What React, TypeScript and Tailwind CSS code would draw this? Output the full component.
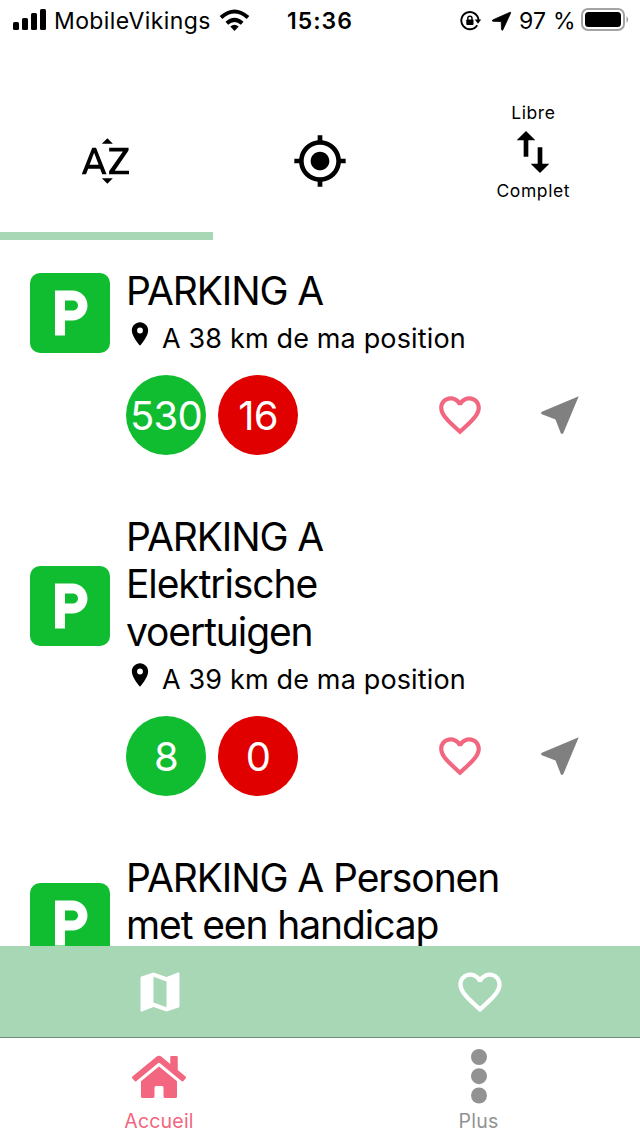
import { FaHome } from 'react-icons/fa';
import {
  MdFavoriteBorder,
  MdGpsFixed,
  MdLocalParking,
  MdLocationOn,
  MdMap,
  MdNearMe,
  MdSortByAlpha,
  MdSwapVert,
} from 'react-icons/md';

const parkings = [
  { id: 1, lines: ['PARKING A'], distance: 38, free: 530, taken: 16 },
  { id: 2, lines: ['PARKING A', 'Elektrische', 'voertuigen'], distance: 39, free: 8, taken: 0 },
  { id: 3, lines: ['PARKING A Personen', 'met een handicap'], distance: 39, free: 2, taken: 0 },
];

type Parking = (typeof parkings)[number];

function StatusBar() {
  return (
    <div className="flex h-10 shrink-0 items-center">
      <svg className="ml-[13px] h-[22px] w-[34px] shrink-0" viewBox="0 0 34 22">
        <rect x="0" y="13" width="6" height="8" rx="1.5" />
        <rect x="9" y="9" width="6" height="12" rx="1.5" />
        <rect x="18" y="4" width="6" height="17" rx="1.5" />
        <rect x="27" y="0" width="6" height="21" rx="1.5" />
      </svg>
      <span className="ml-[7px] w-[158px] pt-0.5 whitespace-nowrap text-[23px] tracking-[0.4px]">MobileVikings</span>
      <svg className="ml-[7px] h-[23px] w-[31px] shrink-0" viewBox="0 0 31 23">
        <path d="M15.5 22 L11.3 17.6 Q15.5 14 19.7 17.6 Z" />
        <path d="M7.8 14.3 Q15.5 7.6 23.2 14.3" fill="none" stroke="#000" strokeWidth="4" />
        <path d="M2 8.6 Q15.5 -3.6 29 8.6" fill="none" stroke="#000" strokeWidth="4" />
      </svg>
      <span className="ml-[37px] w-[68px] pt-0.5 whitespace-nowrap text-[23px] font-semibold tracking-[1px]">15:36</span>
      <svg className="mt-0.5 ml-[105px] h-[22px] w-[22px] shrink-0" viewBox="0 0 22 22">
        <path d="M17.2 15.2 A8.6 8.6 0 1 1 18.5 10" fill="none" stroke="#000" strokeWidth="1.9" />
        <path d="M14.8 9.5 h6.4 l-3.2 4.3 z" />
        <rect x="6.3" y="9.4" width="7.2" height="5.6" rx="0.8" />
        <path d="M7.8 10 V8.3 a2.1 2.1 0 0 1 4.2 0 V10" fill="none" stroke="#000" strokeWidth="1.4" />
      </svg>
      <svg className="mt-0.5 ml-[10px] h-[20px] w-[20px] shrink-0" viewBox="0 0 20 20">
        <path d="M18.2 1.2 L0.6 9 Q-0.3 10 1.1 10.3 L9.2 10.6 L9.5 18.4 Q10 20 10.9 18.8 L18.8 1.7 Z" stroke="#000" strokeWidth="0.8" />
      </svg>
      <span className="ml-[7px] w-[59px] pt-0.5 whitespace-nowrap text-[23px] tracking-[0.2px]">97 %</span>
      <svg className="ml-[3px] h-[24px] w-[49px] shrink-0" viewBox="0 0 49 24">
        <rect x="1" y="1" width="42" height="21" rx="6" fill="none" stroke="#a3a3a3" strokeWidth="2" />
        <rect x="4" y="4" width="36" height="15" rx="3.5" />
        <path d="M45.5 8 Q49 11.5 45.5 15 Z" fill="#a3a3a3" />
      </svg>
    </div>
  );
}

function SortTabs() {
  return (
    <div className="grid h-[200px] shrink-0 grid-cols-3">
      <button className="flex items-center justify-center border-b-8 border-[#a7d7b5] pt-[50px] pr-[1px]">
        <MdSortByAlpha size={56} />
      </button>
      <button className="flex items-center justify-center border-b-8 border-transparent pt-[50px]">
        <MdGpsFixed size={56} />
      </button>
      <button className="flex flex-col items-center border-b-8 border-transparent pt-[61px] text-[17.5px] leading-[23px] tracking-[0.6px]">
        <span>Libre</span>
        <MdSwapVert size={56} className="-mb-[1px]" />
        <span>Complet</span>
      </button>
    </div>
  );
}

function ParkingRow({ parking }: { parking: Parking }) {
  return (
    <li className="pb-[57px]">
      <div className="flex items-center pl-[30px]">
        <div className="flex size-20 shrink-0 items-center justify-center rounded-[10px] bg-[#10bd30] text-white">
          <MdLocalParking size={60} />
        </div>
        <div className="ml-4">
          <h2 className="-mb-px pt-px text-[39px] leading-[47.65px] tracking-[-1.1px]">
            {parking.lines.map((line) => (
              <span key={line} className="block whitespace-nowrap">{line}</span>
            ))}
          </h2>
          <p className="flex h-[46px] text-[27px] leading-[49px] tracking-[0.15px]">
            <MdLocationOn size={28} className="mt-[6px] mr-2 shrink-0" />
            <span className="whitespace-nowrap">A {parking.distance} km de ma position</span>
          </p>
        </div>
      </div>
      <div className="mt-[15px] flex items-center pl-[126px]">
        <div className="flex size-20 items-center justify-center rounded-full bg-[#10bd30] pt-0.5 text-[40px] tracking-[-0.8px] text-white">
          {parking.free}
        </div>
        <div className="ml-3 flex size-20 items-center justify-center rounded-full bg-[#e10000] pt-0.5 text-[40px] tracking-[-0.8px] text-white">
          {parking.taken}
        </div>
        <MdFavoriteBorder size={50} className="ml-[137px] text-[#f2667f]" />
        <MdNearMe size={50} className="ml-[50px] text-[#808080]" />
      </div>
    </li>
  );
}

function BottomNav() {
  return (
    <nav className="grid h-[98px] shrink-0 grid-cols-2 text-[19.5px] leading-6 tracking-[0.2px]">
      <button className="flex flex-col items-center pt-[15px] pr-[2px] text-[#f2667f]">
        <FaHome className="h-12 w-[54px]" />
        <span className="mt-[8px]">Accueil</span>
      </button>
      <button className="flex flex-col items-center pt-[10px] pr-[3px] text-[#929292]">
        <svg className="h-14 w-4" viewBox="0 0 16 56" fill="currentColor">
          <circle cx="8" cy="9" r="8" />
          <circle cx="8" cy="28.2" r="8" />
          <circle cx="8" cy="47.5" r="8" />
        </svg>
        <span className="mt-[5px]">Plus</span>
      </button>
    </nav>
  );
}

export default function App() {
  return (
    <div className="flex h-[1136px] w-[640px] flex-col overflow-hidden bg-white font-['Inter',sans-serif] text-black">
      <StatusBar />
      <SortTabs />
      <ul className="min-h-0 flex-1 overflow-hidden pt-[26px]">
        {parkings.map((parking) => (
          <ParkingRow key={parking.id} parking={parking} />
        ))}
      </ul>
      <div className="grid h-[92px] shrink-0 grid-cols-2 border-b border-[#6f9079] bg-[#a7d7b5] text-white">
        <button className="flex items-center justify-center pt-px">
          <MdMap size={52} />
        </button>
        <button className="flex items-center justify-center pt-px">
          <MdFavoriteBorder size={52} />
        </button>
      </div>
      <BottomNav />
    </div>
  );
}
